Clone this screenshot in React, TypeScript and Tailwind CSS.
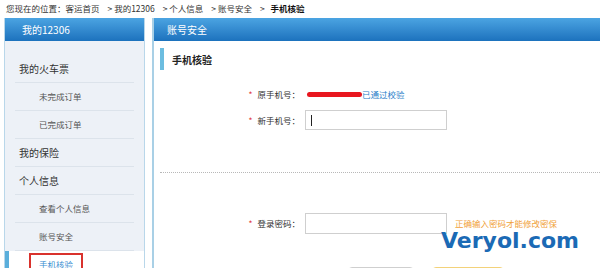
const cjk = { fontFamily: '"Noto Sans CJK SC", "Noto Sans", sans-serif' };

const menu = [
    { label: "我的火车票", sub: false },
    { label: "未完成订单", sub: true },
    { label: "已完成订单", sub: true },
    { label: "我的保险", sub: false },
    { label: "个人信息", sub: false },
    { label: "查看个人信息", sub: true },
    { label: "账号安全", sub: true },
];

function Sidebar() {
    return (
        <aside className="w-[141px] shrink-0 border-x border-[#b9d7ea] bg-[#edf1f7]">
            <div className="flex h-[23px] items-center bg-gradient-to-b from-[#4ba4e2] to-[#1c72bd] pl-[17px] text-[10px] text-white">
                我的12306
            </div>
            <ul className="pt-[14px]">
                {menu.map((m) => (
                    <li key={m.label} className="mx-[10px] flex h-[28px] items-center border-b border-[#dce3eb]">
                        <span className={m.sub ? "pl-[24px] text-[8.5px] text-[#555]" : "pl-[4px] text-[10px] text-[#333]"}>{m.label}</span>
                    </li>
                ))}
                <li className="relative flex h-[28px] items-center bg-white">
                    <span className="h-full w-[4px] bg-[#5aaedb]" />
                    <span className="ml-[20px] border-2 border-[#d9322d] px-[8px] pb-[6px] pt-[3px] text-[8.5px] leading-[12px] text-[#3b8fd2]">手机核验</span>
                </li>
            </ul>
        </aside>
    );
}

function Label({ text }: { text: string }) {
    return (
        <div className="w-[151px] shrink-0 pr-[5px] text-right text-[8.5px] text-[#333]">
            <span className="mr-[5px] text-[#e0393e]">*</span>
            {text}
        </div>
    );
}

function Main() {
    return (
        <section className="ml-[7px] flex-1 border-l-2 border-[#a9d0e6]">
            <div className="flex h-[23px] items-center bg-gradient-to-b from-[#4ba4e2] to-[#1c72bd] pl-[13px] text-[10px] text-white">
                账号安全
            </div>
            <div className="flex items-center pl-[6px] pt-[7px]">
                <span className="h-[22px] w-[4px] bg-[#6cbde0]" />
                <h2 className="ml-[8px] text-[10px] font-bold text-[#222]">手机核验</h2>
            </div>

            <div className="mt-[14px] flex h-[20px] items-center">
                <Label text="原手机号：" />
                <span className="ml-[2px] h-[5px] w-[55px] rounded-full bg-[#e8161f]" />
                <span className="text-[8.5px] text-[#2c7fc9]">已通过校验</span>
            </div>
            <div className="mt-[6px] flex h-[20px] items-center">
                <Label text="新手机号：" />
                <div className="flex h-[20px] w-[142px] items-center border border-[#cfcfcf] pl-[5px]">
                    <span className="h-[11px] w-px bg-[#222]" />
                </div>
            </div>

            <div className="ml-[6px] mt-[42px] border-t border-dotted border-[#b8b8b8]" />

            <div className="mt-[40px] flex h-[21px] items-center">
                <Label text="登录密码：" />
                <div className="h-[21px] w-[142px] border border-[#cfcfcf]" />
                <span className="ml-[8px] text-[8.5px] text-[#f1a23a]">正确输入密码才能修改密保</span>
            </div>

            <div className="mt-[33px] flex pl-[194px]">
                <span className="h-[20px] w-[66px] rounded-sm border border-[#cfcfcf] bg-[#f5f5f5]" />
                <span className="ml-[18px] h-[20px] w-[72px] rounded-sm border border-[#f3d27a] bg-[#fff3c8]" />
            </div>
        </section>
    );
}

export default function App() {
    return (
        <div className="relative h-[268px] w-[600px] overflow-hidden bg-white" style={cjk}>
            <div className="flex h-[17px] items-center gap-[8px] pl-[6px] text-[8.5px] text-[#333]">
                <span>您现在的位置：客运首页</span>
                <span>&gt; 我的12306</span>
                <span>&gt; 个人信息</span>
                <span>&gt; 账号安全</span>
                <span>
                    &gt; <b className="ml-[4px] text-[#111]">手机核验</b>
                </span>
            </div>
            <div className="mt-px flex pl-[4px]">
                <Sidebar />
                <Main />
            </div>
            <div
                className="absolute left-[441px] top-[224px] text-[22px] font-bold text-[#1b6ab5]"
                style={{ fontFamily: '"DejaVu Sans", sans-serif' }}
            >
                Veryol.com
            </div>
        </div>
    );
}
